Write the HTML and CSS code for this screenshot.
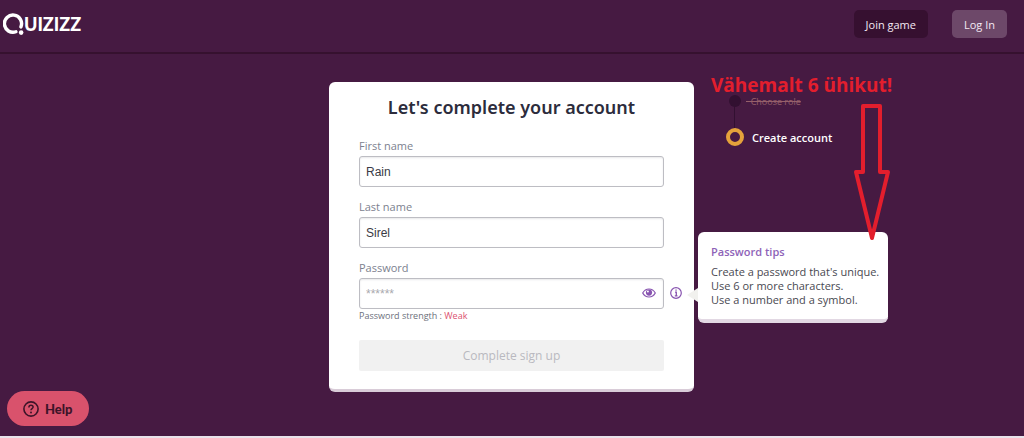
FILE: index.html
```html
<!DOCTYPE html>
<html lang="en">
<head>
<meta charset="utf-8">
<meta name="viewport" content="width=device-width, initial-scale=1">
<title>Quizizz – Create account</title>
<link rel="stylesheet" href="styles.css">
</head>
<body>
<header class="topbar">
  <a class="logo" href="#" aria-label="Quizizz">
    <svg class="logo-mark" viewBox="0 0 22 24" aria-hidden="true">
      <path d="M13.500 19.600A9 9 0 1 1 18.800 14.500" fill="none" stroke="#fff" stroke-width="3.600" stroke-linecap="round"/>
      <circle cx="19" cy="20.500" r="2.400" fill="#fff"/>
    </svg>
    <span class="logo-text">UIZIZZ</span>
  </a>
  <nav class="actions">
    <button class="nav-btn nav-btn-dark" type="button">Join game</button>
    <button class="nav-btn nav-btn-light" type="button">Log In</button>
  </nav>
</header>

<main class="layout">
  <form class="card">
    <h1 class="title">Let's complete your account</h1>
    <div class="field">
      <label class="label" for="first">First name</label>
      <input class="input" id="first" type="text" value="Rain">
    </div>
    <div class="field">
      <label class="label" for="last">Last name</label>
      <input class="input" id="last" type="text" value="Sirel">
    </div>
    <div class="field">
      <label class="label" for="password">Password</label>
      <div class="password-row">
        <input class="input input-password" id="password" type="password" placeholder="******">
        <button class="icon-btn eye-btn" type="button" aria-label="Show password">
          <svg viewBox="0 0 14 10" width="14" height="10" aria-hidden="true">
            <path d="M.7 5C2.2 2.3 4.4 1 7 1s4.800 1.300 6.300 4C11.800 7.700 9.600 9 7 9S2.200 7.700.7 5Z" fill="#fff" stroke="#8854b0" stroke-width="1.200"/>
            <circle cx="7" cy="4.600" r="3.100" fill="#8854b0"/>
            <circle cx="5.900" cy="3.400" r="1" fill="#fff"/>
          </svg>
        </button>
        <div class="info">
          <button class="icon-btn" type="button" aria-label="Password tips">
            <svg viewBox="0 0 12 12" width="12" height="12" aria-hidden="true">
              <circle cx="6" cy="6" r="5.300" fill="none" stroke="#8854b0" stroke-width="1.200"/>
              <path d="M5 5.200h1.300v3.600M4.800 8.800h2.700M5.400 3.200h1.300" fill="none" stroke="#8854b0" stroke-width="1.300"/>
            </svg>
          </button>
          <section class="tips">
            <h2 class="tips-title">Password tips</h2>
            <p class="tips-text">Create a password that's unique.<br>Use 6 or more characters.<br>Use a number and a symbol.</p>
          </section>
        </div>
      </div>
      <p class="strength">Password strength : <span class="weak">Weak</span></p>
    </div>
    <button class="submit" type="submit" disabled>Complete sign up</button>
  </form>

  <aside class="side">
    <ol class="steps">
      <li class="step step-done"><span class="dot"></span><s class="step-old">&nbsp; Choose role</s></li>
      <li class="step step-current"><span class="dot"></span><span>Create account</span></li>
    </ol>
    <p class="note">Vähemalt 6 ühikut!</p>
    <svg class="arrow" viewBox="0 0 38 140" aria-hidden="true">
      <path d="M10 4H27V70H35L19 136L3 70H10Z" fill="none" stroke="#e31e2d" stroke-width="4" stroke-linejoin="round"/>
    </svg>
  </aside>
</main>

<button class="help" type="button">
  <svg viewBox="0 0 16 16" width="16" height="16" aria-hidden="true">
    <circle cx="8" cy="8" r="7.100" fill="none" stroke="#3d1429" stroke-width="1.600"/>
    <path d="M5.900 6.400C5.900 5 6.800 4.200 8 4.200s2.100.8 2.100 1.900C10.100 7.600 8 7.600 8 9.300" fill="none" stroke="#3d1429" stroke-width="1.500"/>
    <circle cx="8" cy="11.500" r="1" fill="#3d1429"/>
  </svg>
  Help
</button>
</body>
</html>
```
FILE: styles.css
```css
* { box-sizing: border-box; }

body {
  margin: 0;
  min-height: 100vh;
  display: flex;
  flex-direction: column;
  background: #461a42;
  border-bottom: 2px solid #e9e2ea;
  font-family: "Open Sans", "Noto Sans", sans-serif;
  color: #2c2c3c;
}

button { font-family: inherit; border: 0; cursor: pointer; }
h1, h2, p, ol { margin: 0; padding: 0; }

.topbar {
  display: flex;
  justify-content: space-between;
  align-items: center;
  height: 54px;
  padding: 0 17px 4px 3px;
  border-bottom: 2px solid #36112f;
}

.logo { display: flex; align-items: center; color: #fff; text-decoration: none; }
.logo-mark { width: 21px; height: 23px; }
.logo-text {
  font: 900 18px/24px Lato, sans-serif;
}

.actions { display: flex; gap: 24px; }
.nav-btn {
  height: 28px;
  padding: 0 12px;
  border-radius: 5px;
  color: #f3e9f3;
  font-size: 11px;
  font-weight: 500;
}
.nav-btn-dark { background: #361030; }
.nav-btn-light { background: #6d4869; }

.layout {
  display: grid;
  grid-template-columns: 1fr 365px 1fr;
  align-items: start;
  padding: 28px 1px 0 0;
}

.card {
  grid-column: 2;
  padding: 12px 30px 18px;
  background: #fff;
  border-bottom: 3px solid #d9ccd8;
  border-radius: 6px;
}
.title {
  margin-bottom: 16px;
  text-align: center;
  font-family: "Noto Sans", sans-serif;
  font-size: 18px;
  line-height: 26px;
  font-weight: 600;
}

.field { margin-bottom: 10px; }
.label {
  display: block;
  font-size: 11px;
  line-height: 20px;
  color: #7c818f;
}
.input {
  display: block;
  width: 100%;
  height: 31px;
  padding: 0 6px;
  border: 1px solid #bdbdc3;
  border-radius: 3px;
  background: #fff;
  box-shadow: inset 0 1px 2px #e8e8ea;
  color: #3a3b45;
  font: 12px "Liberation Sans", Arial, sans-serif;
}
.input-password { padding-right: 30px; }
.input::placeholder { color: #a9a9ae; }

.password-row { position: relative; }
.icon-btn { display: flex; padding: 0; background: none; }
.eye-btn { position: absolute; right: 8px; top: 10px; }
.info { position: absolute; left: 100%; top: 9px; margin-left: 6px; }

.tips {
  position: absolute;
  left: 28px;
  top: -55px;
  z-index: 1;
  width: 190px;
  padding: 11px 0 12px 13px;
  background: #fff;
  border-bottom: 4px solid #e2d8e3;
  border-radius: 6px;
}
.tips::before {
  content: "";
  position: absolute;
  left: -11px;
  top: 56px;
  border: 7px solid transparent;
  border-left: 0;
  border-right: 11px solid #f1f1ee;
}
.tips-title {
  margin-bottom: 4px;
  font-size: 11px;
  line-height: 18px;
  font-weight: 600;
  color: #8e63b8;
}
.tips-text {
  font-size: 11px;
  line-height: 14px;
  color: #494951;
  white-space: nowrap;
}

.strength { font-size: 9px; line-height: 13px; color: #6c707b; }
.weak { color: #dc5270; }

.submit {
  display: block;
  width: 100%;
  height: 31px;
  margin-top: 18px;
  border-radius: 2px;
  background: #f1f1f1;
  color: #b9b9c0;
  font-size: 12px;
}

.side { position: relative; grid-column: 3; padding: 10px 0 0 32px; }
.steps { list-style: none; }
.step {
  display: flex;
  align-items: center;
  gap: 8px;
  height: 18px;
  font-size: 11px;
  font-weight: 600;
  color: #fff;
}
.step-done { position: relative; margin-bottom: 18px; gap: 2px; }
.step-done::after {
  content: "";
  position: absolute;
  left: 8px;
  top: 14px;
  width: 1px;
  height: 22px;
  background: #321031;
}
.step-done .dot {
  width: 12px;
  height: 12px;
  margin: 0 3px;
  border-radius: 50%;
  background: #321031;
}
.step-current .dot {
  width: 18px;
  height: 18px;
  border: 4px solid #e5a23b;
  border-radius: 50%;
}
.step-old { font-size: 9px; font-weight: 500; color: #96606a; }

.note {
  position: absolute;
  left: 17px;
  top: -10px;
  font-size: 19px;
  line-height: 26px;
  font-weight: 700;
  color: #e31e2d;
  white-space: nowrap;
}
.arrow {
  position: absolute;
  left: 159px;
  top: 20px;
  z-index: 2;
  width: 38px;
  height: 140px;
}

.help {
  position: fixed;
  left: 7px;
  bottom: 12px;
  display: flex;
  align-items: center;
  gap: 6px;
  height: 35px;
  padding: 0 16px;
  border-radius: 18px;
  background: #d9526c;
  color: #3d1429;
  font-family: Lato, sans-serif;
  font-size: 13px;
  font-weight: 900;
}
```
